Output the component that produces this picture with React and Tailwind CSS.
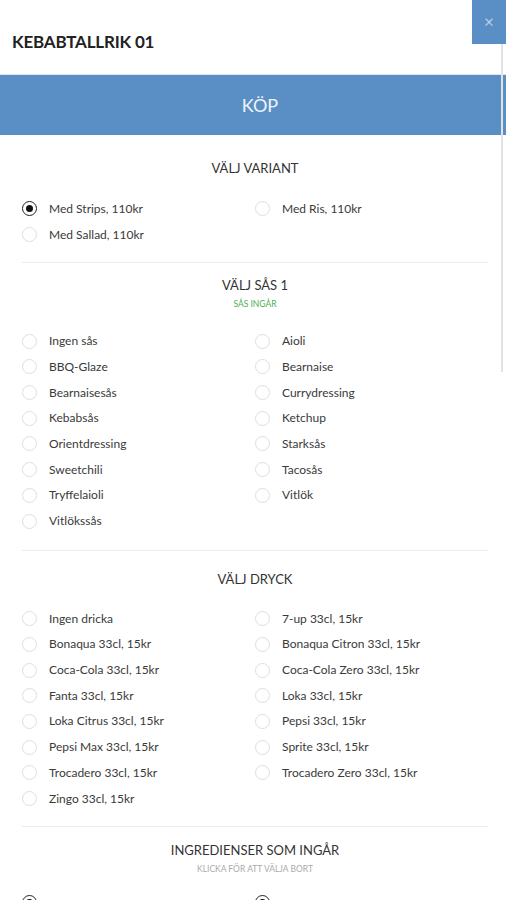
import React, { useState } from "react";

const variants = ["Med Strips, 110kr", "Med Ris, 110kr", "Med Sallad, 110kr"];

const sauces = [
    "Ingen sås", "Aioli",
    "BBQ-Glaze", "Bearnaise",
    "Bearnaisesås", "Currydressing",
    "Kebabsås", "Ketchup",
    "Orientdressing", "Starksås",
    "Sweetchili", "Tacosås",
    "Tryffelaioli", "Vitlök",
    "Vitlökssås",
];

const drinks = [
    "Ingen dricka", "7-up 33cl, 15kr",
    "Bonaqua 33cl, 15kr", "Bonaqua Citron 33cl, 15kr",
    "Coca-Cola 33cl, 15kr", "Coca-Cola Zero 33cl, 15kr",
    "Fanta 33cl, 15kr", "Loka 33cl, 15kr",
    "Loka Citrus 33cl, 15kr", "Pepsi 33cl, 15kr",
    "Pepsi Max 33cl, 15kr", "Sprite 33cl, 15kr",
    "Trocadero 33cl, 15kr", "Trocadero Zero 33cl, 15kr",
    "Zingo 33cl, 15kr",
];

const Radio = ({ label, checked, onClick }) => {
    return (
        <button type="button" onClick={onClick} className="flex h-[25.7px] items-center text-left">
            <span
                className={`flex h-[15px] w-[15px] shrink-0 items-center justify-center rounded-full border
                ${checked ? "border-[1.5px] border-[#222]" : "border-[#dedede]"}`}>
                {checked && <span className="h-[7px] w-[7px] rounded-full bg-[#111]" />}
            </span>
            {label && <span className="ml-[12px] text-[12px] leading-none text-[#3a3a3a]">{label}</span>}
        </button>
    )
}

const Options = ({ items, value, onChange }) => {
    return (
        <div className="grid grid-cols-2">
            {items.map((item) => (
                <Radio key={item} label={item} checked={value === item} onClick={() => onChange(item)} />
            ))}
        </div>
    )
}

const App = () => {
    const [variant, setVariant] = useState("Med Strips, 110kr");
    const [sauce, setSauce] = useState(null);
    const [drink, setDrink] = useState(null);

    return (
        <div className="relative h-[900px] w-[506px] overflow-hidden bg-white font-['Lato','Liberation_Sans',sans-serif] text-[#333]">

            {/* header */}
            <div className="flex h-[74px] items-center pl-[12px] pt-[10px]">
                <h1 className="text-[17px] font-bold tracking-[-0.2px] text-[#222]">KEBABTALLRIK 01</h1>
            </div>
            <button className="absolute right-0 top-0 flex h-[44px] w-[34px] items-center justify-center bg-[#5a8fc6] text-[17px] text-[#b9cfe8]">
                ×
            </button>

            {/* scrollbar */}
            <div className="absolute right-[3px] top-[44px] h-[328px] w-[2px] bg-[#e2e2e2]" />

            {/* buy */}
            <div className="border-t border-[#dfe6ee]">
                <button className="flex h-[60px] w-full items-center justify-center bg-[#5a8fc6] pl-[14px] text-[18px] text-[#eef3f9]">
                    KÖP
                </button>
            </div>

            <div className="px-[22px] pr-[18px]">
                {/* variant */}
                <div className="border-b border-[#ededed] pb-[15px] pt-[23px]">
                    <h2 className="text-center text-[13px] leading-[20px]">VÄLJ VARIANT</h2>
                    <div className="mt-[18px]">
                        <Options items={variants} value={variant} onChange={setVariant} />
                    </div>
                </div>

                {/* sauce */}
                <div className="border-b border-[#ededed] pb-[16px] pt-[12px]">
                    <h2 className="text-center text-[13px] leading-[20px]">VÄLJ SÅS 1</h2>
                    <p className="mt-[4px] text-center text-[8.5px] leading-[10px] text-[#4caf50]">SÅS INGÅR</p>
                    <div className="mt-[19px]">
                        <Options items={sauces} value={sauce} onChange={setSauce} />
                    </div>
                </div>

                {/* drink */}
                <div className="border-b border-[#ededed] pb-[15px] pt-[18px]">
                    <h2 className="text-center text-[13px] leading-[20px]">VÄLJ DRYCK</h2>
                    <div className="mt-[17px]">
                        <Options items={drinks} value={drink} onChange={setDrink} />
                    </div>
                </div>

                {/* ingredients */}
                <div className="pt-[13px]">
                    <h2 className="text-center text-[13px] leading-[20px]">INGREDIENSER SOM INGÅR</h2>
                    <p className="mt-[4px] text-center text-[8.5px] leading-[10px] text-[#aaa]">KLICKA FÖR ATT VÄLJA BORT</p>
                    <div className="mt-[15px] grid grid-cols-2">
                        <Radio checked />
                        <Radio checked />
                    </div>
                </div>
            </div>
        </div>
    )
}

export default App
